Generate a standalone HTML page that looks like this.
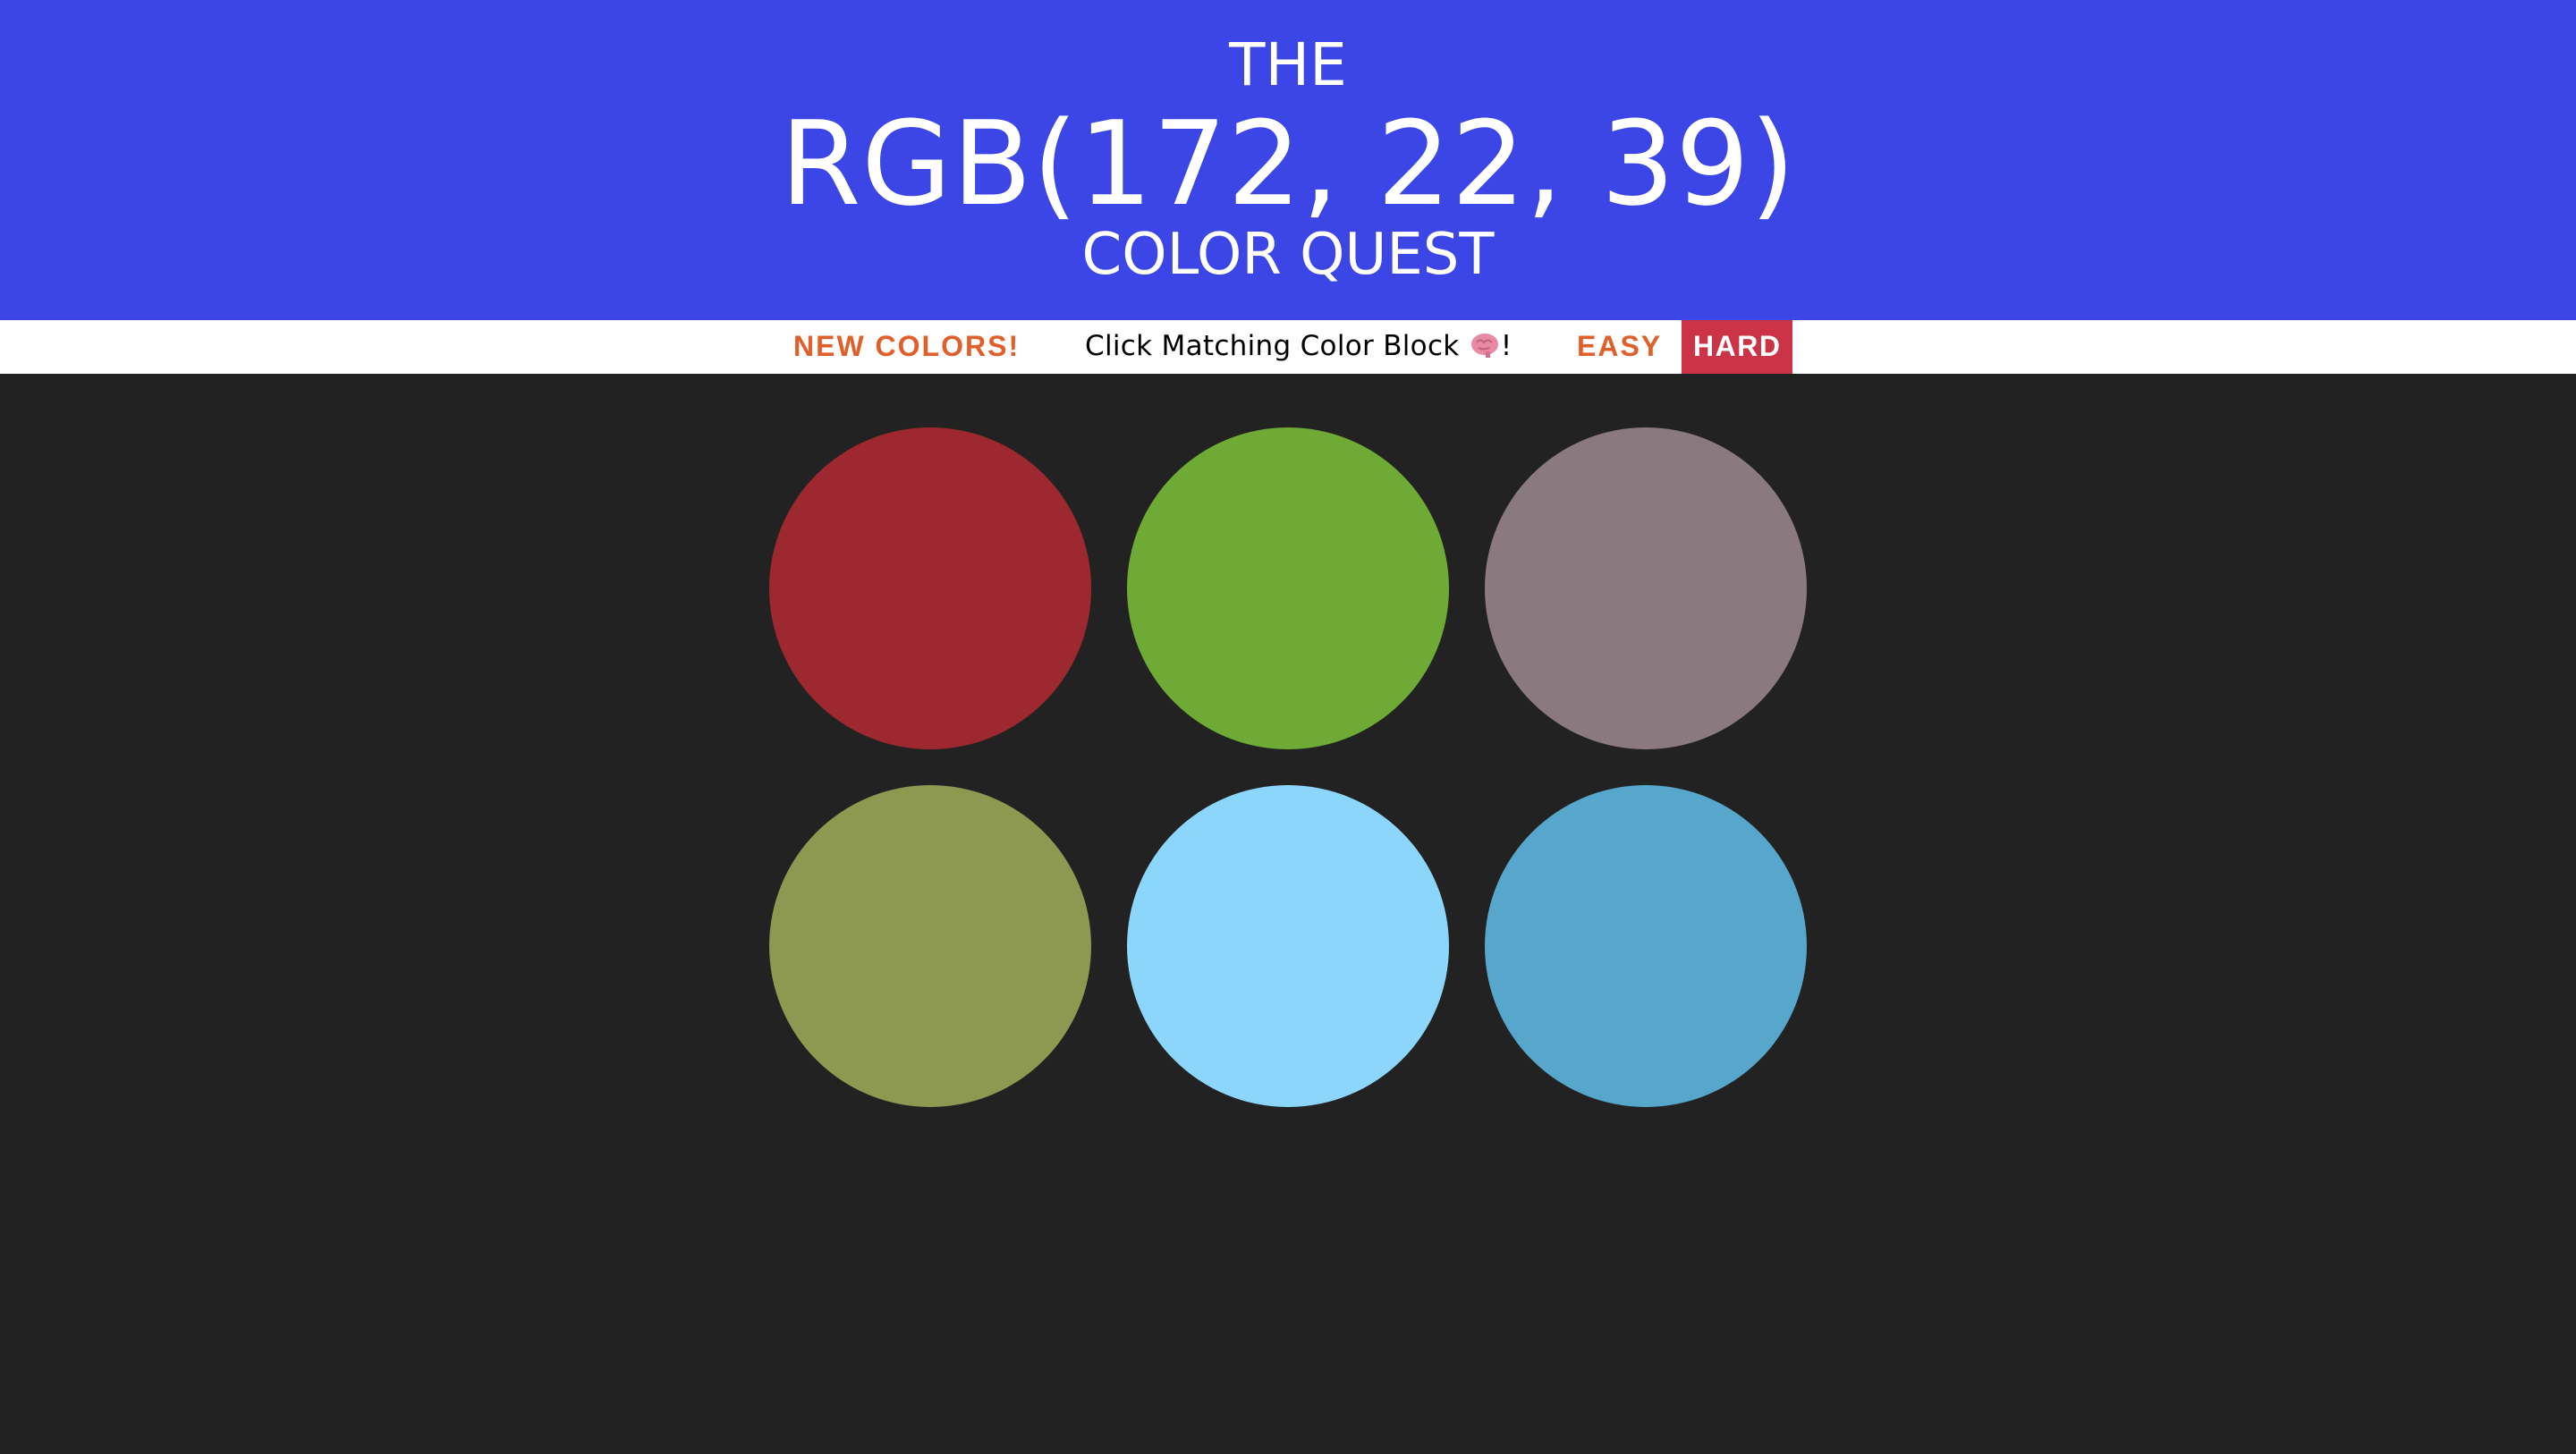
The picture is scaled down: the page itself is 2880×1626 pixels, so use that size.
<!DOCTYPE html>
<html><head><meta charset="utf-8"><style>
html,body{margin:0;padding:0;width:2880px;height:1626px;background:#222222;overflow:hidden;}
.hdr{position:absolute;left:0;top:0;width:2880px;height:358px;background:#3c46e6;}
.t{position:absolute;left:0;width:2880px;text-align:center;color:#fff;font-family:"DejaVu Sans","Liberation Sans",sans-serif;line-height:1;white-space:nowrap;}
.nav{position:absolute;left:0;top:358px;width:2880px;height:60px;background:#fff;}
.n{position:absolute;top:13px;line-height:1;font-family:"Liberation Sans",Arial,sans-serif;font-weight:bold;font-size:32px;color:#e0602c;white-space:nowrap;letter-spacing:2px;}
.hard{position:absolute;left:1880px;top:0;width:124px;height:60px;background:#cb3346;}
.c{position:absolute;width:360px;height:360px;border-radius:50%;}
</style></head><body>
<div class="hdr">
<div class="t" style="top:40px;font-size:66px;">THE</div>
<div class="t" style="top:118px;font-size:130px;letter-spacing:0.6px;">RGB(172, 22, 39)</div>
<div class="t" style="top:253px;font-size:64px;">COLOR QUEST</div>
</div>
<div class="nav">
<div class="n" style="left:887px;">NEW COLORS!</div>
<div style="position:absolute;left:1213px;top:13px;line-height:1;font-family:'DejaVu Sans','Liberation Sans',sans-serif;font-size:31px;letter-spacing:0.3px;color:#000;white-space:nowrap;">Click Matching Color Block <svg width="36" height="30" viewBox="0 0 34 30" style="vertical-align:-4px"><ellipse cx="17" cy="14" rx="15" ry="12" fill="#e98aa5"/><path d="M8 12 q4-5 8 0 q4-5 9 0 M10 18 q5 3 12 0" stroke="#c0607d" stroke-width="2" fill="none"/><rect x="18" y="22" width="5" height="7" fill="#d46f8d"/></svg>!</div>
<div class="n" style="left:1763px;">EASY</div>
<div class="hard"><div class="n" style="left:13px;color:#fff;letter-spacing:1.5px;">HARD</div></div>
</div>
<div class="c" style="left:860px;top:478px;background:#9e2830;"></div>
<div class="c" style="left:1260px;top:478px;background:#6eaa35;"></div>
<div class="c" style="left:1660px;top:478px;background:#8a7a80;"></div>
<div class="c" style="left:860px;top:878px;background:#8d9850;"></div>
<div class="c" style="left:1260px;top:878px;background:#8cd5fb;"></div>
<div class="c" style="left:1660px;top:878px;background:#57a7cc;"></div>
</body></html>
